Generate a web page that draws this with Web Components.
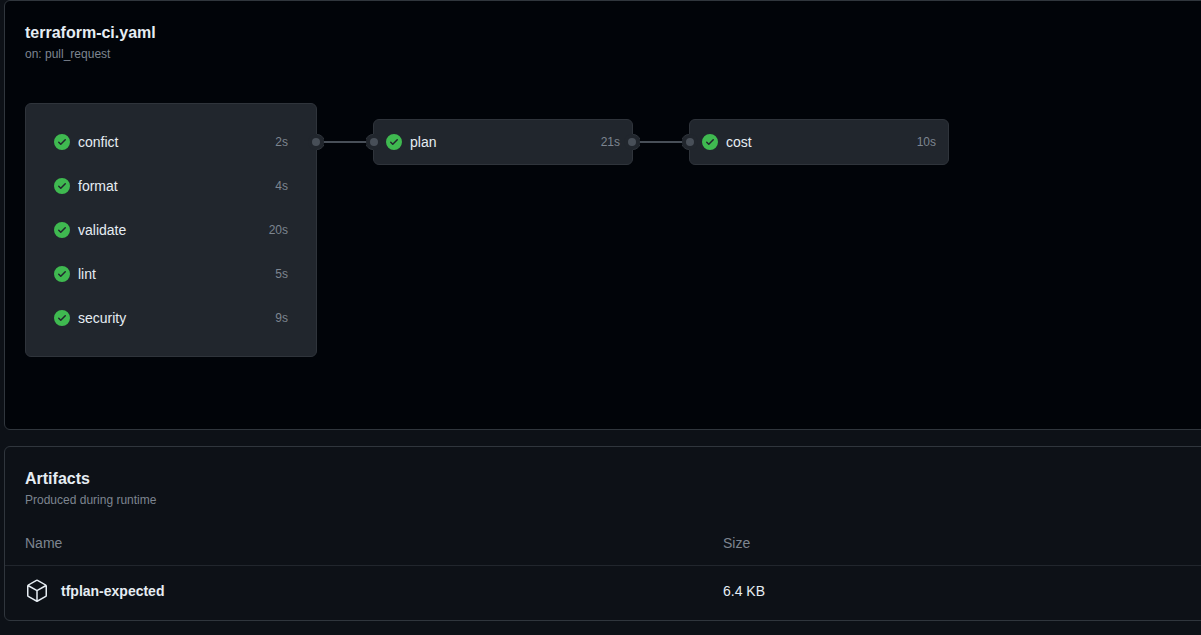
<!DOCTYPE html>
<html lang="en">
<head>
<meta charset="utf-8">
<title>terraform-ci.yaml</title>
<style>
html{background:#0d1117}
body{margin:0;height:635px;overflow:hidden;background:#0d1117;color:#e6edf3;font:14px/20px "Liberation Sans",Arial,sans-serif}
</style>
</head>
<body>
<run-summary></run-summary>
<script>
const define = (name, html) => {
  const template = document.createElement('template');
  template.innerHTML = html;
  customElements.define(name, class extends HTMLElement {
    constructor() {
      super();
      this.attachShadow({mode: 'open'}).append(template.content.cloneNode(true));
    }
  });
};

define('check-icon', `
<style>:host{display:block;width:16px;height:16px;flex:none}svg{display:block;fill:#3fb950}</style>
<svg width="16" height="16" viewBox="0 0 16 16"><path d="M8 16A8 8 0 1 1 8 0a8 8 0 0 1 0 16Zm3.78-9.72a.751.751 0 0 0-.018-1.042.751.751 0 0 0-1.042-.018L6.75 9.19 5.28 7.72a.751.751 0 0 0-1.042.018.751.751 0 0 0-.018 1.042l2 2a.75.75 0 0 0 1.06 0Z"/></svg>`);

define('job-row', `
<style>
:host{display:flex;align-items:center;gap:8px;height:44px;padding:0 12px;box-sizing:border-box}
.name{flex:1}
.time{font-size:12px;color:#7d8590}
</style>
<check-icon></check-icon><span class="name"><slot></slot></span><span class="time"><slot name="time"></slot></span>`);

define('job-card', `
<style>
:host{display:block;position:relative;box-sizing:border-box;width:260px;border:1px solid #2f343b;border-radius:6px;background:#21262d;flex:none}
:host([group]){width:292px;padding:16px}
:host([single]){margin-top:16px}
.port{position:absolute;top:14px;width:16px;height:16px;display:none}
.in{left:-8px}
.out{right:-8px}
:host([group]) .port{top:30px}
:host([input]) .in,:host([output]) .out{display:block}
svg{display:block}
</style>
<slot></slot>
<svg class="port in" viewBox="0 0 16 16"><circle cx="8" cy="8" r="8" fill="#21262d"/><path d="M7 .5a7.5 7.5 0 0 0 0 15" fill="none" stroke="#2f343b"/><circle cx="8" cy="8" r="4" fill="#484f58"/></svg>
<svg class="port out" viewBox="0 0 16 16"><circle cx="8" cy="8" r="8" fill="#21262d"/><path d="M9 .5a7.5 7.5 0 0 1 0 15" fill="none" stroke="#2f343b"/><circle cx="8" cy="8" r="4" fill="#484f58"/></svg>`);

define('job-link', `<style>:host{display:block;width:56px;height:2px;margin-top:38px;background:#484f58;flex:none}</style>`);

define('panel-box', `
<style>
:host{display:block;box-sizing:border-box;border:1px solid #30363d;border-radius:6px;background:var(--panel-bg,#0d1117)}
header{padding:20px 20px 0}
h2{margin:0;font-size:16px;line-height:24px;font-weight:700}
p{margin:0;font-size:12px;line-height:18px;color:#7d8590}
</style>
<header><h2><slot name="title"></slot></h2><p><slot name="note"></slot></p></header><slot></slot>`);

define('artifact-table', `
<style>
:host{display:block}
.row{display:grid;grid-template-columns:698px 1fr;align-items:center;padding:0 20px}
.head{height:44px;color:#7d8590;margin-top:12px;border-bottom:1px solid #21262d}
.item{height:50px}
.name{display:flex;align-items:center;gap:12px;font-weight:700}
svg{display:block;fill:#e6edf3}
</style>
<div class="row head"><span>Name</span><span>Size</span></div>
<div class="row item"><span class="name"><svg width="24" height="24" viewBox="0 0 24 24"><path d="M12.876.64V.639l8.25 4.763c.541.313.875.89.875 1.515v9.525a1.75 1.75 0 0 1-.875 1.516l-8.25 4.762a1.748 1.748 0 0 1-1.75 0l-8.25-4.763a1.75 1.75 0 0 1-.875-1.515V6.917c0-.625.334-1.202.875-1.515L11.126.64a1.748 1.748 0 0 1 1.75 0Zm-1 1.298L4.251 6.34l7.75 4.474 7.75-4.474-7.625-4.402a.248.248 0 0 0-.25 0Zm.875 19.123 7.625-4.402a.25.25 0 0 0 .125-.216V7.639l-7.75 4.474ZM3.501 7.64v8.803c0 .09.048.172.125.216l7.625 4.402v-8.947Z"/></svg>tfplan-expected</span><span>6.4 KB</span></div>`);

define('run-summary', `
<style>
:host{display:flex;flex-direction:column;gap:16px;margin-left:4px;width:1220px}
.workflow{--panel-bg:#010409;height:430px}
.artifacts{height:175px}
.graph{display:flex;align-items:flex-start;padding:40px 20px 0}
</style>
<panel-box class="workflow">
  <span slot="title">terraform-ci.yaml</span><span slot="note">on: pull_request</span>
  <div class="graph">
    <job-card group output>
      <job-row>confict<span slot="time">2s</span></job-row>
      <job-row>format<span slot="time">4s</span></job-row>
      <job-row>validate<span slot="time">20s</span></job-row>
      <job-row>lint<span slot="time">5s</span></job-row>
      <job-row>security<span slot="time">9s</span></job-row>
    </job-card>
    <job-link></job-link>
    <job-card single input output><job-row>plan<span slot="time">21s</span></job-row></job-card>
    <job-link></job-link>
    <job-card single input><job-row>cost<span slot="time">10s</span></job-row></job-card>
  </div>
</panel-box>
<panel-box class="artifacts">
  <span slot="title">Artifacts</span><span slot="note">Produced during runtime</span>
  <artifact-table></artifact-table>
</panel-box>`);
</script>
</body>
</html>
